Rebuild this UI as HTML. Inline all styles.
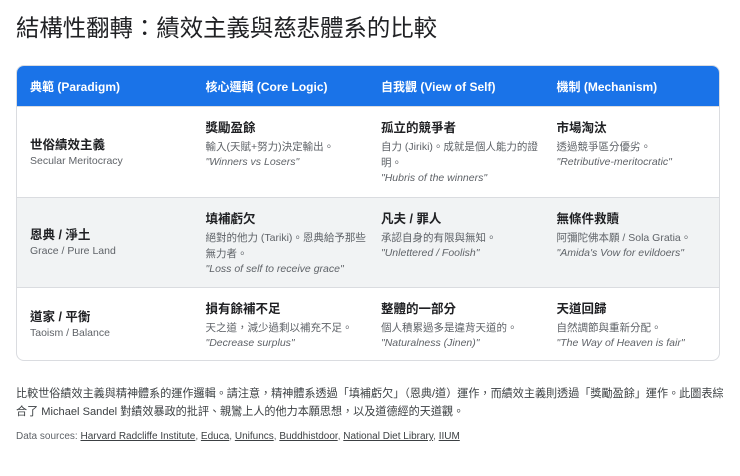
<!DOCTYPE html>
<html><head><meta charset="utf-8"><style>
*{margin:0;padding:0;box-sizing:border-box}
body{width:740px;height:476px;background:#fff;font-family:"Liberation Sans","Noto Sans CJK TC",sans-serif;color:#202124;position:relative;overflow:hidden}
h1{position:absolute;left:16px;top:9px;font-size:23.4px;font-weight:400;letter-spacing:0;font-family:"Liberation Sans","Noto Sans CJK TC",sans-serif}
.tbl{position:absolute;left:16px;top:65px;width:704px;height:296px;border:1px solid #dadce0;border-radius:8px;overflow:hidden}
.hd{height:40px;background:#1a73e8;color:#fff;font-weight:700;font-size:12px;display:flex;align-items:center}
.hd div,.row>div{width:176px;padding-left:13px}
.row{display:flex;border-top:1px solid #dadce0}
.r1{height:91px}.r2{height:90px;background:#f1f3f4}.r3{height:74px}
.row>div{padding-top:12px}
.row>div.c1{display:flex;flex-direction:column;justify-content:center;padding-top:0}
.t{font-weight:700;font-size:12.5px;line-height:18px;color:#202124}
.s{font-size:10.5px;color:#5f6368;line-height:15px}
.d{font-size:10.5px;color:#5f6368;line-height:16px;margin-top:2px;padding-right:2px}
.q{font-size:10.5px;color:#5f6368;font-style:italic;line-height:15px}
.cap{position:absolute;left:16px;top:385px;width:712px;font-size:11.1px;line-height:18px;color:#3c4043}
.src{position:absolute;left:16px;top:431px;font-size:10px;color:#5f6368}
.src u{color:#3c4043}
</style></head><body>
<h1>結構性翻轉：績效主義與慈悲體系的比較</h1>
<div class="tbl">
<div class="hd"><div>典範 (Paradigm)</div><div>核心邏輯 (Core Logic)</div><div>自我觀 (View of Self)</div><div>機制 (Mechanism)</div></div>
<div class="row r1">
<div class="c1"><div class="t">世俗績效主義</div><div class="s">Secular Meritocracy</div></div>
<div><div class="t">獎勵盈餘</div><div class="d">輸入(天賦+努力)決定輸出。</div><div class="q">"Winners vs Losers"</div></div>
<div><div class="t">孤立的競爭者</div><div class="d">自力 (Jiriki)。成就是個人能力的證明。</div><div class="q">"Hubris of the winners"</div></div>
<div><div class="t">市場淘汰</div><div class="d">透過競爭區分優劣。</div><div class="q">"Retributive-meritocratic"</div></div>
</div>
<div class="row r2">
<div class="c1"><div class="t">恩典 / 淨土</div><div class="s">Grace / Pure Land</div></div>
<div><div class="t">填補虧欠</div><div class="d">絕對的他力 (Tariki)。恩典給予那些無力者。</div><div class="q">"Loss of self to receive grace"</div></div>
<div><div class="t">凡夫 / 罪人</div><div class="d">承認自身的有限與無知。</div><div class="q">"Unlettered / Foolish"</div></div>
<div><div class="t">無條件救贖</div><div class="d">阿彌陀佛本願 / Sola Gratia。</div><div class="q">"Amida's Vow for evildoers"</div></div>
</div>
<div class="row r3">
<div class="c1"><div class="t">道家 / 平衡</div><div class="s">Taoism / Balance</div></div>
<div><div class="t">損有餘補不足</div><div class="d">天之道，減少過剩以補充不足。</div><div class="q">"Decrease surplus"</div></div>
<div><div class="t">整體的一部分</div><div class="d">個人積累過多是違背天道的。</div><div class="q">"Naturalness (Jinen)"</div></div>
<div><div class="t">天道回歸</div><div class="d">自然調節與重新分配。</div><div class="q">"The Way of Heaven is fair"</div></div>
</div>
</div>
<div class="cap">比較世俗績效主義與精神體系的運作邏輯。請注意，精神體系透過「填補虧欠」（恩典/道）運作，而績效主義則透過「獎勵盈餘」運作。此圖表綜合了 Michael Sandel 對績效暴政的批評、親鸞上人的他力本願思想，以及道德經的天道觀。</div>
<div class="src">Data sources: <u>Harvard Radcliffe Institute</u>, <u>Educa</u>, <u>Unifuncs</u>, <u>Buddhistdoor</u>, <u>National Diet Library</u>, <u>IIUM</u></div>
</body></html>
